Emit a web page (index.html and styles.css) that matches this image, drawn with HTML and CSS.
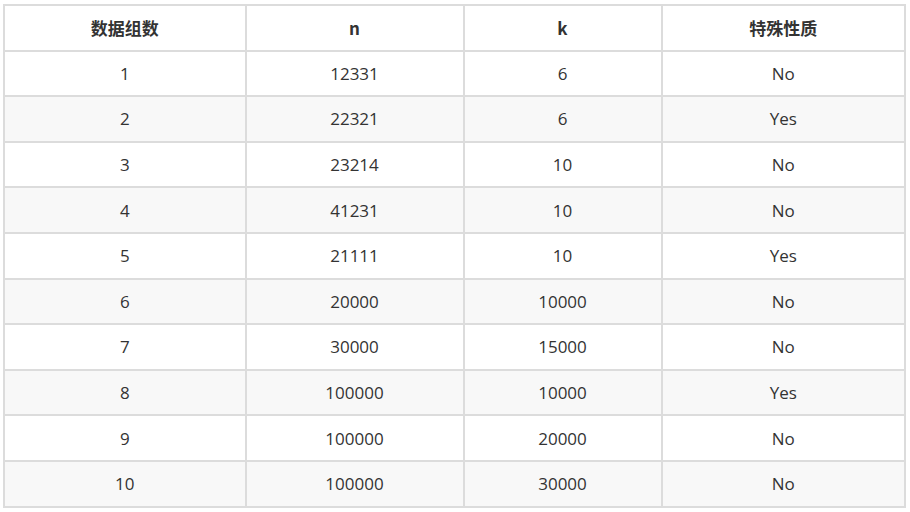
FILE: index.html
```html
<!DOCTYPE html>
<html lang="zh">
<head>
<meta charset="utf-8">
<link rel="stylesheet" href="styles.css">
</head>
<body>
<table class="data-table">
  <colgroup>
    <col class="c1"><col class="c2"><col class="c3"><col class="c4">
  </colgroup>
  <thead>
    <tr><th>数据组数</th><th>n</th><th>k</th><th>特殊性质</th></tr>
  </thead>
  <tbody>
    <tr><td>1</td><td>12331</td><td>6</td><td>No</td></tr>
    <tr><td>2</td><td>22321</td><td>6</td><td>Yes</td></tr>
    <tr><td>3</td><td>23214</td><td>10</td><td>No</td></tr>
    <tr><td>4</td><td>41231</td><td>10</td><td>No</td></tr>
    <tr><td>5</td><td>21111</td><td>10</td><td>Yes</td></tr>
    <tr><td>6</td><td>20000</td><td>10000</td><td>No</td></tr>
    <tr><td>7</td><td>30000</td><td>15000</td><td>No</td></tr>
    <tr><td>8</td><td>100000</td><td>10000</td><td>Yes</td></tr>
    <tr><td>9</td><td>100000</td><td>20000</td><td>No</td></tr>
    <tr><td>10</td><td>100000</td><td>30000</td><td>No</td></tr>
  </tbody>
</table>
</body>
</html>
```
FILE: styles.css
```css
html, body {
  margin: 0;
  padding: 0;
  background: #ffffff;
}
body {
  padding: 4px 4px 0 3px;
  font-family: "Open Sans", "Noto Sans CJK SC", sans-serif;
  color: #333333;
}
.data-table {
  border-collapse: collapse;
  table-layout: fixed;
  width: 903px;
  font-size: 17px;
}
.c1 { width: 241.5px; }
.c2 { width: 218px; }
.c3 { width: 198px; }
.c4 { width: 243.5px; }
.data-table th,
.data-table td {
  border: 2px solid #dcdcdc;
  text-align: center;
  vertical-align: middle;
  height: 42.6px;
  padding: 1px 8px 0;
  line-height: 24px;
}
.data-table th {
  font-family: "Noto Sans CJK SC", "Open Sans", sans-serif;
  font-weight: 700;
  font-size: 17px;
  color: #333333;
}
.data-table tbody tr:nth-child(even) {
  background: #f8f8f8;
}
```
